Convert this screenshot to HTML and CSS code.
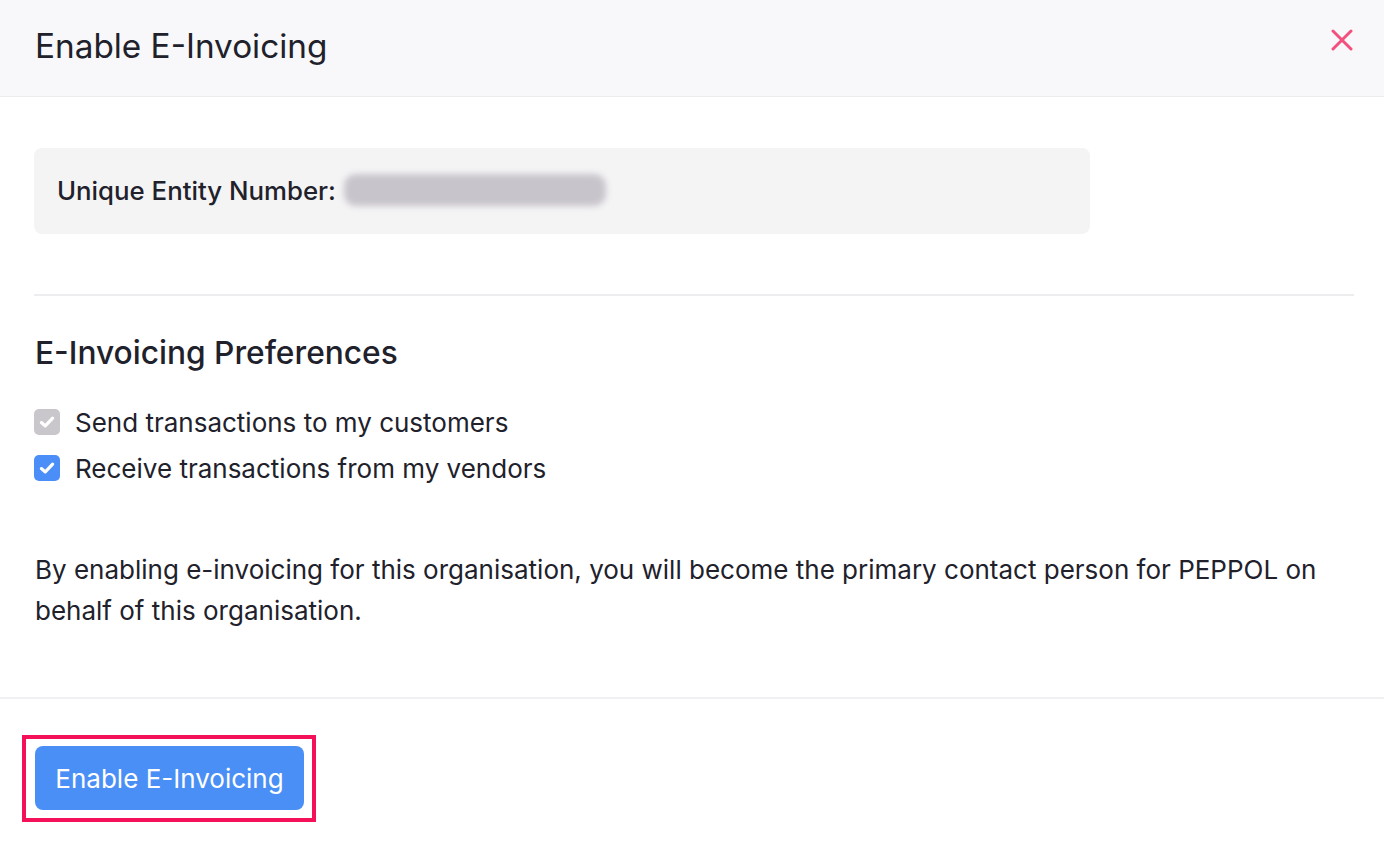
FILE: index.html
```html
<!DOCTYPE html>
<html>
<head>
<meta charset="utf-8">
<title>Enable E-Invoicing</title>
<link rel="stylesheet" href="styles.css">
</head>
<body>
	<div class="modal">
		<div class="modal-header">
			<h1>Enable E-Invoicing</h1>
			<span class="close">
				<svg width="22" height="22" viewBox="0 0 22 22"><path d="M2 2 L20 20 M20 2 L2 20" stroke="#f2507f" stroke-width="3" stroke-linecap="round"/></svg>
			</span>
		</div>

		<div class="modal-body">
			<div class="uen-box">
				<span class="uen-label">Unique Entity Number:</span>
				<span class="uen-value"></span>
			</div>

			<hr class="divider">

			<h2>E-Invoicing Preferences</h2>
			<div class="check-row">
				<span class="checkbox disabled">
					<svg width="18" height="18" viewBox="0 0 16 16"><path d="M3 8.5 L6.5 11.5 L13 4.5" fill="none" stroke="#fff" stroke-width="2.8" stroke-linecap="round" stroke-linejoin="round"/></svg>
				</span>
				<span>Send transactions to my customers</span>
			</div>
			<div class="check-row">
				<span class="checkbox">
					<svg width="18" height="18" viewBox="0 0 16 16"><path d="M3 8.5 L6.5 11.5 L13 4.5" fill="none" stroke="#fff" stroke-width="2.8" stroke-linecap="round" stroke-linejoin="round"/></svg>
				</span>
				<span>Receive transactions from my vendors</span>
			</div>

			<p class="note">By enabling e-invoicing for this organisation, you will become the primary contact person for PEPPOL on behalf of this organisation.</p>
		</div>

		<div class="modal-footer">
			<div class="highlight">
				<button class="btn">Enable E-Invoicing</button>
			</div>
		</div>
	</div>
</body>
</html>
```

FILE: styles.css
```css
body {
	margin: 0px;
	background: white;
	font-family: Inter, "Noto Sans", sans-serif;
	color: #21212b;
}

.modal {
	width: 1384px;
	height: 850px;
}

.modal-header {
	height: 96px;
	background: #f8f8fa;
	border-bottom: 1px solid #ececef;
	display: flex;
	align-items: center;
	justify-content: space-between;
	padding: 0 31px 0 35px;
}

.modal-header h1 {
	margin: 0;
	font-size: 33.3px;
	font-weight: 400;
	padding-bottom: 4px;
}

.close {
	display: flex;
	padding-bottom: 16px;
}

.modal-body {
	padding: 51px 30px 0 34px;
}

.uen-box {
	width: 1056px;
	height: 86px;
	box-sizing: border-box;
	background: #f4f4f5;
	border-radius: 8px;
	display: flex;
	align-items: center;
	padding-left: 23px;
	padding-bottom: 2px;
}

.uen-label {
	font-size: 25.8px;
	font-weight: 500;
}

.uen-value {
	width: 262px;
	height: 32px;
	margin-left: 8px;
	background: #c8c4cb;
	border-radius: 12px;
	filter: blur(3px);
}

.divider {
	border: none;
	border-top: 2px solid #ededf0;
	margin: 60px 0 0 0;
}

h2 {
	font-size: 31.7px;
	font-weight: 500;
	line-height: 38px;
	margin: 38px 0 27px 1px;
}

.check-row {
	display: flex;
	align-items: center;
	gap: 15px;
	height: 46px;
	font-size: 26px;
}

.checkbox {
	width: 26px;
	height: 26px;
	border-radius: 5px;
	background: #4b8ef7;
	display: flex;
	align-items: center;
	justify-content: center;
}

.checkbox.disabled {
	background: #c9c6cc;
}

.note {
	font-size: 26px;
	line-height: 41px;
	margin: 58px 0 0 1px;
}

.modal-footer {
	border-top: 2px solid #f0f0f2;
	margin-top: 66px;
	padding: 36px 0 0 22px;
}

.highlight {
	display: inline-block;
	border: 4px solid #f5115a;
	padding: 7px 8px 8px 9px;
}

.btn {
	background: #4a8ff6;
	color: white;
	border: none;
	border-radius: 8px;
	font-family: Inter, sans-serif;
	font-size: 26px;
	width: 269px;
	height: 64px;
	display: block;
}
```
